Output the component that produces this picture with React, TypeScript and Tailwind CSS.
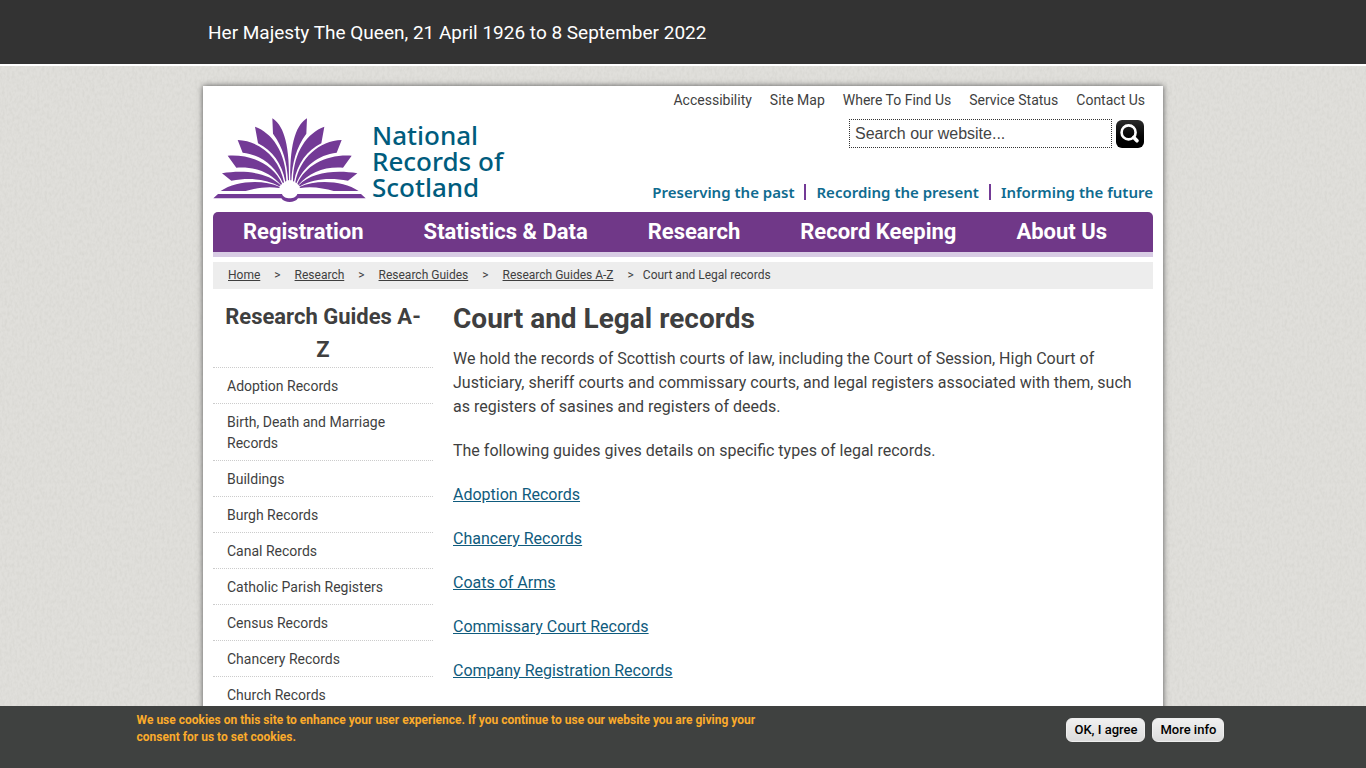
import { Fragment } from "react";

const topLinks = ["Accessibility", "Site Map", "Where To Find Us", "Service Status", "Contact Us"];

const navLinks = ["Registration", "Statistics & Data", "Research", "Record Keeping", "About Us"];

const crumbs = ["Home", "Research", "Research Guides", "Research Guides A-Z"];

const guides = [
    "Adoption Records",
    "Birth, Death and Marriage Records",
    "Buildings",
    "Burgh Records",
    "Canal Records",
    "Catholic Parish Registers",
    "Census Records",
    "Chancery Records",
    "Church Records",
];

const legalGuides = [
    "Adoption Records",
    "Chancery Records",
    "Coats of Arms",
    "Commissary Court Records",
    "Company Registration Records",
];

const PaperTexture = () => (
    <svg aria-hidden="true" className="absolute inset-0 -z-10 h-full w-full">
        <filter id="paper" x="0" y="0" width="100%" height="100%">
            <feTurbulence type="fractalNoise" baseFrequency="0.4 0.25" numOctaves="2" seed="4" />
            <feColorMatrix values="0 0 0 0 0.4  0 0 0 0 0.4  0 0 0 0 0.36  0.28 0 0 0 -0.1" />
        </filter>
        <rect width="100%" height="100%" filter="url(#paper)" />
    </svg>
);

// Left half of the open book, mirrored for the right half
const Pages = () => (
    <>
        <path d="M217 40C246 58 269 105 267 226L264 226C261 174 250 128 219 86Z" />
        <path d="M165 65C215 83 258 140 259 228L256 230C246 176 217 136 174 115Z" />
        <path d="M113 105C180 107 239 160 252 232L249 235C228 186 184 149 128 143Z" />
        <path d="M83 152C156 147 221 180 246 236L243 240C210 202 165 184 109 188Z" />
        <path d="M66 205C132 194 205 202 242 241L238 244C198 221 149 218 94 227Z" />
        <path d="M62 258C107 228 187 222 240 246L237 249C201 243 166 250 137 258Z" />
    </>
);

const BookLogo = () => (
    <svg viewBox="39 39 459 255" className="h-[85px] w-[153px] shrink-0 fill-[#733a96]" aria-hidden="true">
        <Pages />
        <g transform="matrix(-1 0 0 1 538 0)">
            <Pages />
        </g>
        <path d="M54 267H246C250 284 288 284 292 267H483L497 280H294C284 295 254 295 244 280H40Z" />
    </svg>
);

const Header = () => (
    <header>
        <ul className="flex justify-end gap-[18px] pt-1 pr-2 text-sm">
            {topLinks.map((link) => (
                <li key={link}><a href="#">{link}</a></li>
            ))}
        </ul>
        <div className="flex justify-between">
            <a href="#" className="flex gap-1.5 pt-2">
                <BookLogo />
                <span className="pt-1 font-['Noto_Sans'] text-[26px] leading-[26px] font-medium text-[#005c7d]">
                    National<br />Records of<br />Scotland
                </span>
            </a>
            <div className="flex flex-col items-end justify-between pt-[9px] pb-px">
                <form className="flex items-center gap-1 pr-[9px]">
                    <input
                        type="text"
                        aria-label="Search our website"
                        defaultValue="Search our website..."
                        className="h-[29px] w-[263px] border border-dotted border-[#333] px-[5px] font-['Liberation_Sans',sans-serif] text-base text-[#444]"
                    />
                    <button type="button" aria-label="Search" className="rounded-md bg-[#111] bg-linear-to-b from-[#2c2c2c] to-black">
                        <svg viewBox="0 0 28 28" className="size-7" fill="none" stroke="white">
                            <circle cx="12.6" cy="12.4" r="7" strokeWidth="2.6" />
                            <path d="M17.8 17.4L21 20.8" strokeWidth="3.6" strokeLinecap="round" />
                        </svg>
                    </button>
                </form>
                <p className="flex items-center gap-2.5 font-['Noto_Sans'] text-[15px] leading-5 font-semibold text-[#0f6b8f]">
                    <span>Preserving the past</span>
                    <span className="h-4 w-0.5 bg-[#733a96]" />
                    <span>Recording the present</span>
                    <span className="h-4 w-0.5 bg-[#733a96]" />
                    <span>Informing the future</span>
                </p>
            </div>
        </div>
        <nav className="mt-[9px] flex h-[45px] rounded-t-[5px] border-b-[5px] border-[#d8cce4] bg-[#703888]">
            {navLinks.map((link) => (
                <a key={link} href="#" className="px-[30px] text-[22px] leading-[40px] font-bold text-white">{link}</a>
            ))}
        </nav>
    </header>
);

const Breadcrumb = () => (
    <nav className="mt-[5px] flex h-[27px] items-center bg-[#ededed] pb-0.5 pl-[15px] text-xs">
        {crumbs.map((crumb, i) => (
            <Fragment key={crumb}>
                <a href="#" className="underline">{crumb}</a>
                <span className={i === crumbs.length - 1 ? "pr-[9px] pl-3.5" : "px-3.5"}>&gt;</span>
            </Fragment>
        ))}
        <span>Court and Legal records</span>
    </nav>
);

const Sidebar = () => (
    <aside className="w-[220px] shrink-0">
        <h2 className="px-2 pb-px text-center text-[22px] leading-[33px] font-bold">Research Guides A-Z</h2>
        <ul className="text-sm leading-[21px]">
            {guides.map((guide) => (
                <li key={guide} className="border-t border-dotted border-[#ccc] pt-2 pr-3.5 pb-1.5 pl-3.5">
                    <a href="#">{guide}</a>
                </li>
            ))}
        </ul>
    </aside>
);

const Content = () => (
    <main className="flex flex-1 flex-col gap-5 pr-2.5 text-base">
        <div>
            <h1 className="pb-[9px] text-[28px] leading-[38px] font-bold">Court and Legal records</h1>
            <p>
                We hold the records of Scottish courts of law, including the Court of Session, High Court of Justiciary, sheriff courts and commissary courts, and legal registers associated with them, such as registers of sasines and registers of deeds.
            </p>
        </div>
        <p>The following guides gives details on specific types of legal records.</p>
        {legalGuides.map((guide) => (
            <p key={guide}><a href="#" className="text-[#0f5b7d] underline">{guide}</a></p>
        ))}
    </main>
);

const CookieBar = () => (
    <div className="fixed inset-x-0 bottom-0 h-[62px] bg-[#3f4140]">
        <div className="mx-auto flex w-4/5 justify-between">
            <p className="max-w-[640px] pt-1.5 text-xs leading-[17px] font-bold text-[#fbab2b]">
                We use cookies on this site to enhance your user experience. If you continue to use our website you are giving your consent for us to set cookies.
            </p>
            <div className="flex gap-[7px] pt-3 pr-[5px]">
                {["OK, I agree", "More info"].map((label) => (
                    <button key={label} type="button" className="h-6 rounded-md border border-[#eee] bg-linear-to-b from-[#f0f0f0] to-[#dcdcdc] px-[7px] text-[13px] leading-5 font-medium text-black">
                        {label}
                    </button>
                ))}
            </div>
        </div>
    </div>
);

export default function App() {
    return (
        <div className="relative isolate flex min-h-screen flex-col bg-[#e0dfdb] font-[Roboto,sans-serif] text-[#3f3f3f]">
            <PaperTexture />
            <div className="border-b-2 border-white bg-[#333]">
                <p className="mx-auto h-16 w-full max-w-[960px] px-[5px] text-[19px] leading-[66px] text-white">
                    Her Majesty The Queen, 21 April 1926 to 8 September 2022
                </p>
            </div>
            <div className="mx-auto mt-5 w-full max-w-[960px] flex-1 bg-white px-2.5 shadow-[0_0_6px_#555]">
                <Header />
                <Breadcrumb />
                <div className="flex gap-5 pt-[11px]">
                    <Sidebar />
                    <Content />
                </div>
            </div>
            <CookieBar />
        </div>
    );
}
